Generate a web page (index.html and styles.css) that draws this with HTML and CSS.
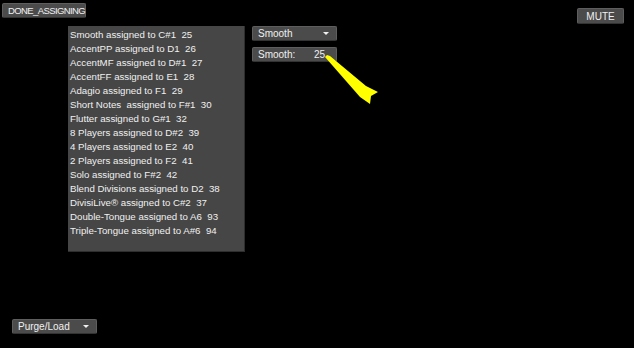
FILE: index.html
```html
<!DOCTYPE html>
<html lang="en">
<head>
  <meta charset="UTF-8">
  <title>Articulation Assign</title>
  <link rel="stylesheet" href="styles.css">
</head>
<body>
  <div class="screen">
    <div class="topbar">
      <div class="btn done">DONE_ASSIGNING</div>
      <div class="btn mute">MUTE</div>
    </div>

    <div class="main">
      <div class="list">
        <div>Smooth assigned to C#1&nbsp; 25</div>
        <div>AccentPP assigned to D1&nbsp; 26</div>
        <div>AccentMF assigned to D#1&nbsp; 27</div>
        <div>AccentFF assigned to E1&nbsp; 28</div>
        <div>Adagio assigned to F1&nbsp; 29</div>
        <div>Short Notes&nbsp; assigned to F#1&nbsp; 30</div>
        <div>Flutter assigned to G#1&nbsp; 32</div>
        <div>8 Players assigned to D#2&nbsp; 39</div>
        <div>4 Players assigned to E2&nbsp; 40</div>
        <div>2 Players assigned to F2&nbsp; 41</div>
        <div>Solo assigned to F#2&nbsp; 42</div>
        <div>Blend Divisions assigned to D2&nbsp; 38</div>
        <div>DivisiLive&reg; assigned to C#2&nbsp; 37</div>
        <div>Double-Tongue assigned to A6&nbsp; 93</div>
        <div>Triple-Tongue assigned to A#6&nbsp; 94</div>
      </div>

      <div class="controls">
        <div class="btn menu">
          <span>Smooth</span>
          <span class="caret"></span>
        </div>
        <div class="btn value">
          <span>Smooth:</span>
          <span>25</span>
        </div>
      </div>
    </div>

    <div class="footer">
      <div class="btn menu">
        <span>Purge/Load</span>
        <span class="caret"></span>
      </div>
    </div>

    <!-- pointer arrow -->
    <svg class="arrow" width="60" height="60" viewBox="320 50 60 60">
      <polygon points="327,55 330,56 366,86 378,92 371,96 370,104 360,97 325,57" fill="#ffff00"/>
    </svg>
  </div>
</body>
</html>
```

FILE: styles.css
```css
html,
body {
  margin: 0;
  background: #000;
}
.screen {
  position: relative;
  width: 634px;
  height: 348px;
  display: flex;
  flex-direction: column;
  font-family: "Liberation Sans", Arial, sans-serif;
  color: #f0f0f0;
}
.topbar {
  display: flex;
  justify-content: space-between;
  align-items: flex-start;
  height: 24px;
  padding: 0 10px 0 2px;
}
.btn {
  box-sizing: border-box;
  background: #4b4b4b;
  border: 1px solid #5e5e5e;
  border-bottom-color: #333;
  border-radius: 2px;
  font-size: 10px;
  line-height: 13px;
  display: flex;
  align-items: center;
}
.done {
  margin-top: 3px;
  width: 84px;
  height: 15px;
  padding-left: 5px;
  font-size: 9.5px;
  letter-spacing: -0.6px;
}
.mute {
  margin-top: 8px;
  width: 47px;
  height: 16px;
  justify-content: center;
}
.main {
  display: flex;
  gap: 7px;
  margin-top: 2px;
  padding-left: 68px;
}
.list {
  box-sizing: border-box;
  width: 177px;
  height: 226px;
  padding: 2px 0 0 2px;
  background: #464646;
  border-right: 1px solid #2e2e2e;
  border-bottom: 1px solid #2e2e2e;
  font-size: 9.7px;
  line-height: 14px;
}
.controls {
  display: flex;
  flex-direction: column;
  gap: 6px;
}
.menu,
.value {
  width: 85px;
  height: 15px;
  padding: 0 5px;
  justify-content: space-between;
}
.value {
  padding-right: 11px;
}
.caret {
  width: 0;
  height: 0;
  border-left: 3px solid transparent;
  border-right: 3px solid transparent;
  border-top: 3px solid #f0f0f0;
  margin-right: 2px;
}
.footer {
  margin-top: auto;
  padding: 0 0 14px 12px;
}
.arrow {
  position: absolute;
  left: 320px;
  top: 50px;
}
```
